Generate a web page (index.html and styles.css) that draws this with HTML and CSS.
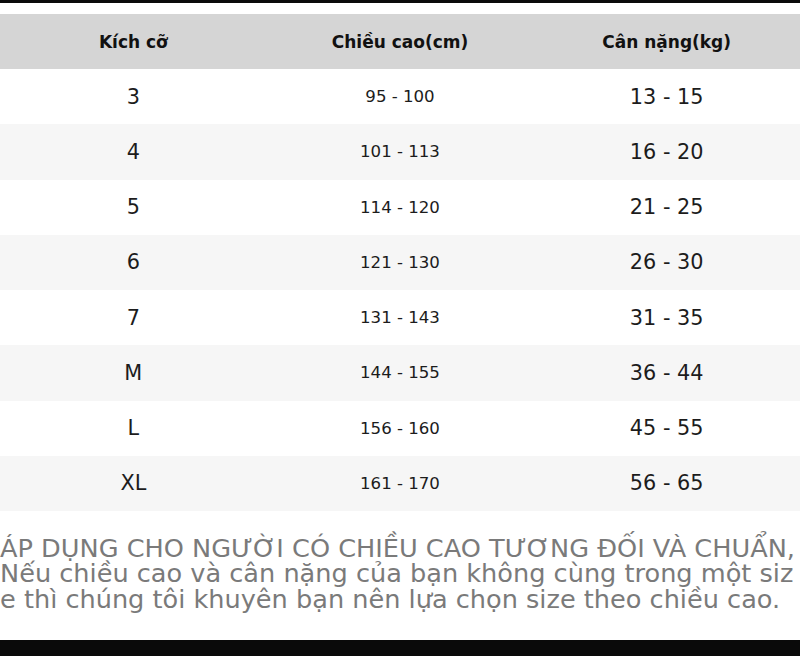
FILE: index.html
```html
<!DOCTYPE html>
<html lang="vi">
<head>
<meta charset="utf-8">
<title>Bảng size</title>
<link rel="stylesheet" href="styles.css">
</head>
<body>
<div class="page">
  <div class="bar-top"></div>
  <div class="chart">
    <div class="row head">
      <div class="cell">Kích cỡ</div>
      <div class="cell">Chiều cao(cm)</div>
      <div class="cell">Cân nặng(kg)</div>
    </div>
    <div class="row">
      <div class="cell big">3</div><div class="cell mid">95 - 100</div><div class="cell big">13 - 15</div>
    </div>
    <div class="row alt">
      <div class="cell big">4</div><div class="cell mid">101 - 113</div><div class="cell big">16 - 20</div>
    </div>
    <div class="row">
      <div class="cell big">5</div><div class="cell mid">114 - 120</div><div class="cell big">21 - 25</div>
    </div>
    <div class="row alt">
      <div class="cell big">6</div><div class="cell mid">121 - 130</div><div class="cell big">26 - 30</div>
    </div>
    <div class="row">
      <div class="cell big">7</div><div class="cell mid">131 - 143</div><div class="cell big">31 - 35</div>
    </div>
    <div class="row alt">
      <div class="cell big">M</div><div class="cell mid">144 - 155</div><div class="cell big">36 - 44</div>
    </div>
    <div class="row">
      <div class="cell big">L</div><div class="cell mid">156 - 160</div><div class="cell big">45 - 55</div>
    </div>
    <div class="row alt">
      <div class="cell big">XL</div><div class="cell mid">161 - 170</div><div class="cell big">56 - 65</div>
    </div>
  </div>
  <p class="note">ÁP DỤNG CHO NGƯỜI CÓ CHIỀU CAO TƯƠNG ĐỐI VÀ CHUẨN,<br>Nếu chiều cao và cân nặng của bạn không cùng trong một siz<br>e thì chúng tôi khuyên bạn nên lựa chọn size theo chiều cao.</p>
  <div class="spacer"></div>
  <div class="bar-bottom"></div>
</div>
</body>
</html>
```
FILE: styles.css
```css
html, body {
  margin: 0;
  padding: 0;
  background: #ffffff;
}
.page {
  width: 800px;
  height: 656px;
  display: flex;
  flex-direction: column;
  overflow: hidden;
  font-family: "DejaVu Sans", sans-serif;
}
.bar-top {
  height: 3px;
  background: #0a0a0a;
  flex: none;
}
.chart {
  margin-top: 11px;
  flex: none;
}
.row {
  display: grid;
  grid-template-columns: repeat(3, 1fr);
  height: 55.25px;
  background: #ffffff;
  color: #1c1c1c;
}
.row.head {
  height: 55px;
  background: #d5d5d5;
  font-weight: bold;
  font-size: 17px;
  color: #111111;
}
.row.alt {
  background: #f6f6f6;
}
.cell {
  display: flex;
  align-items: center;
  justify-content: center;
  white-space: nowrap;
}
.big {
  font-size: 20.8px;
}
.mid {
  font-size: 16.6px;
}
.note {
  margin: 25px 0 0 0;
  font-size: 25.6px;
  line-height: 25.3px;
  color: #7a7a7a;
  white-space: nowrap;
}
.spacer {
  flex: 1;
}
.bar-bottom {
  height: 16px;
  background: #0a0a0a;
  flex: none;
}
```
